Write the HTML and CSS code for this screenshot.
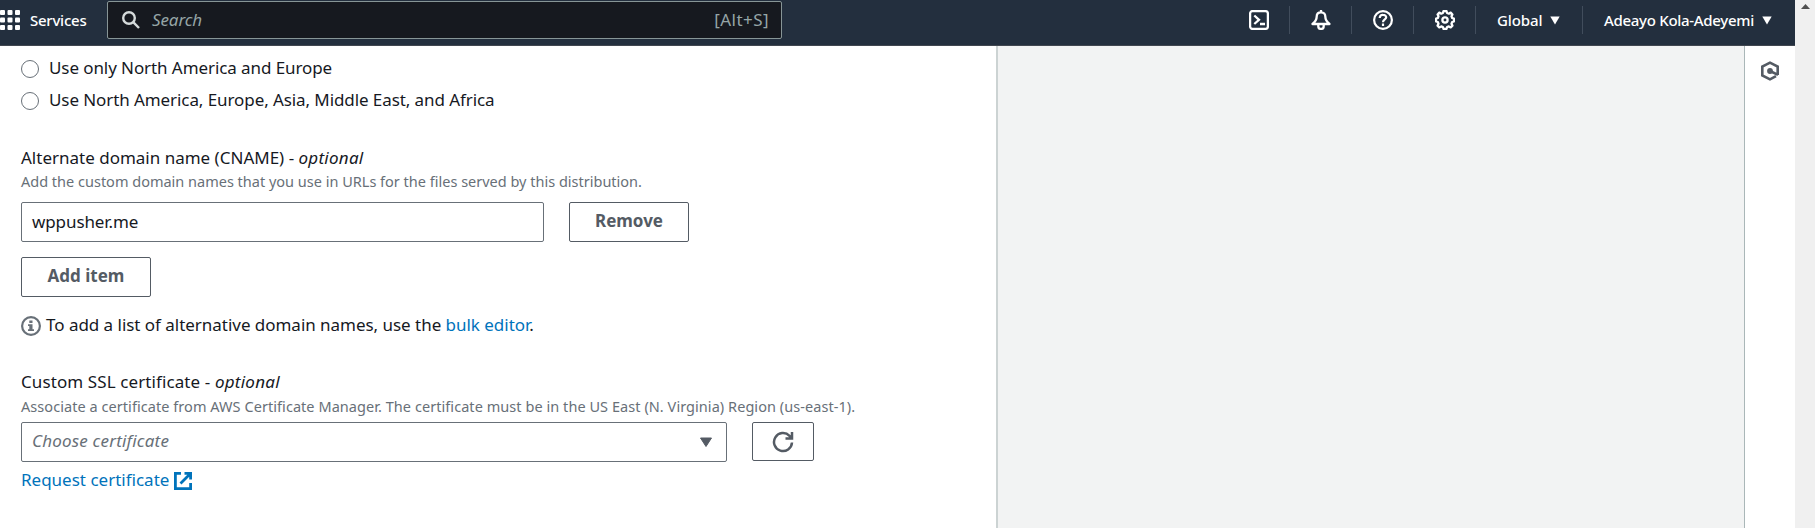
FILE: index.html
```html
<!DOCTYPE html>
<html lang="en">
<head>
<meta charset="utf-8">
<title>Create distribution</title>
<link rel="stylesheet" href="styles.css">
</head>
<body>
<div class="page">
  <header class="topbar">
    <svg class="grid-icon" width="20" height="20" viewBox="0 0 20 20" fill="#fff"><rect width="5" height="5" rx="1"/><rect x="7.5" width="5" height="5" rx="1"/><rect x="15" width="5" height="5" rx="1"/><rect y="7.5" width="5" height="5" rx="1"/><rect x="7.5" y="7.5" width="5" height="5" rx="1"/><rect x="15" y="7.5" width="5" height="5" rx="1"/><rect y="15" width="5" height="5" rx="1"/><rect x="7.5" y="15" width="5" height="5" rx="1"/><rect x="15" y="15" width="5" height="5" rx="1"/></svg>
    <span class="services">Services</span>
    <div class="search">
      <svg width="18" height="18" viewBox="0 0 18 18" fill="none" stroke="#d5dbdb" stroke-width="2.4"><circle cx="7" cy="7" r="5.8"/><path d="M11.2 11.2 17 17"/></svg>
      <span class="search-text">Search</span>
      <span class="shortcut">[Alt+S]</span>
    </div>
    <nav class="tools">
      <div class="tool"><svg width="20" height="20" viewBox="0 0 20 20" fill="none" stroke="#fff" stroke-width="2.3"><rect x="1.100" y="1.100" width="17.800" height="17.800" rx="2.500"/><path d="M5.300 5.500 10 9.800 5.300 14M11 14h5"/></svg></div>
      <div class="tool"><svg width="20" height="20" viewBox="0 0 20 20" fill="none" stroke="#fff" stroke-width="2.3" stroke-linejoin="round"><path d="M10 0v2M10 2.300C7 2.300 5.700 4 5.700 6.500C5.700 10 4 12 1.500 14H18.500C16 12 14.300 10 14.300 6.500C14.300 4 13 2.300 10 2.300ZM7.300 14v2.200a2.700 2.700 0 0 0 5.400 0V14"/></svg></div>
      <div class="tool"><svg width="20" height="20" viewBox="0 0 20 20" fill="none" stroke="#fff" stroke-width="2.200"><circle cx="10" cy="10" r="8.900"/><path d="M6.800 8V7.200A3.100 3.100 0 0 1 10 4.900C12 4.900 13.200 5.800 13.200 7.300C13.200 9.500 10 9.300 10 12.300M10 13.600v2.300"/></svg></div>
      <div class="tool"><svg width="20" height="20" viewBox="0 0 20 20" fill="none" stroke="#fff" stroke-width="2.300" stroke-linejoin="round"><circle cx="10" cy="10" r="2.600"/><path d="M8.500 1.100h3l.6 1.900 1.800.7L15.700 2.600l1.700 1.900-.9 1.800.7 1.700 1.700.6v2.800l-1.700.6-.7 1.700.9 1.900-1.700 1.800-1.800-1-1.800.7-.6 1.800h-3l-.6-1.800-1.700-.7-1.900 1-1.700-1.800.9-1.900-.7-1.700L1.100 11.400V8.600L2.800 8l.7-1.700-.9-1.800 1.700-1.900 1.900 1.100L7.900 3z"/></svg></div>
      <div class="menu region">Global<svg width="10" height="9" viewBox="0 0 10 9"><path d="M.3.5h9.400L5 8.500z" fill="#fff"/></svg></div>
      <div class="menu account"><span class="name">Adeayo Kola-Adeyemi</span><svg width="10" height="9" viewBox="0 0 10 9"><path d="M.3.5h9.400L5 8.500z" fill="#fff"/></svg></div>
    </nav>
  </header>
  <div class="scrollbar"><svg width="9" height="5" viewBox="0 0 9 5"><path d="M4.500 0 9 5H0z" fill="#505050"/></svg></div>
  <main class="form">
    <div class="option"><i class="radio"></i><span>Use only North America and Europe</span></div>
    <div class="option"><i class="radio"></i><span>Use North America, Europe, Asia, Middle East, and Africa</span></div>
    <div class="label label-cname"><span>Alternate domain name (CNAME) - <em>optional</em></span></div>
    <div class="hint"><span>Add the custom domain names that you use in URLs for the files served by this distribution.</span></div>
    <div class="row row-cname">
      <div class="input"><span class="domain">wppusher.me</span></div>
      <div class="button remove"><span>Remove</span></div>
    </div>
    <div class="button add"><span>Add item</span></div>
    <div class="info">
      <svg width="20" height="20" viewBox="0 0 20 20"><circle cx="10" cy="10" r="8.900" fill="none" stroke="#687078" stroke-width="2.200"/><path d="M8.300 4.500h3.200v2.500h-3.200zM7 8.200h4.500v5h1.500v1.800H7v-1.800h1.300V10H7z" fill="#687078"/></svg>
      <span>To add a list of alternative domain names, use the <a>bulk editor</a>.</span>
    </div>
    <div class="label label-ssl"><span>Custom SSL certificate - <em>optional</em></span></div>
    <div class="hint hint-ssl"><span>Associate a certificate from AWS Certificate Manager. The certificate must be in the US East (N. Virginia) Region (us-east-1).</span></div>
    <div class="row row-ssl">
      <div class="input select"><span>Choose certificate</span><svg width="14" height="11" viewBox="0 0 14 11"><path d="M1.500 1h11L7 9.500z" fill="#545b64" stroke="#545b64" stroke-linejoin="round"/></svg></div>
      <div class="button refresh"><svg width="22" height="22" viewBox="0 0 22 22" fill="none" stroke="#545b64" stroke-width="2.500"><path d="M20 11.500a9 9 0 1 1-2.500-6.700L19.500 7M20 1v6.500h-6.500"/></svg></div>
    </div>
    <div class="request"><a>Request certificate</a><svg width="18" height="18" viewBox="0 0 18 18" fill="none" stroke="#0073bb" stroke-width="2.800"><path d="M7 1.400H1.400v15.200h15.200V11M10.500 1.400h6.100v6.100M16.500 1.500 6.500 11.500"/></svg></div>
  </main>
  <div class="panel"></div>
  <aside class="rail"><svg width="20" height="20" viewBox="0 0 20 20" fill="none" stroke="#545b64" stroke-width="2.600"><path d="M17.700 14V5.600L10 1.600 2.300 5.600v8.800L10 18.400l6-3.200M10 10l8 3.800"/><circle cx="10" cy="10" r="2.900" fill="#545b64" stroke="none"/></svg></aside>
</div>
</body>
</html>
```

FILE: styles.css
```css
* { box-sizing: border-box; }
body { margin: 0; overflow: hidden; font-family: "Noto Sans", sans-serif; font-size: 17px; color: #16191f; }
span, a { white-space: nowrap; }
svg { display: block; flex: none; }
.page { width: 1815px; height: 528px; display: grid; grid-template-columns: 998px 746px 51px 20px; grid-template-rows: 46px 482px; }
.topbar { grid-column: 1 / 4; grid-row: 1; display: flex; background: #232f3e; border-bottom: 1px solid #414750; color: #fff; }
.grid-icon { margin-top: 10px; }
.services { margin-left: 10px; width: 77px; line-height: 41px; font-size: 15px; font-weight: 500; letter-spacing: -0.25px; }
.search { margin-top: 1px; width: 675px; height: 38px; display: flex; align-items: center; padding: 0 12px 0 14px; background: #16191f; border: 1px solid #879596; border-radius: 2px; color: #95a5a6; }
.search span { padding-bottom: 1px; }
.search-text { margin-left: 12px; font-style: italic; letter-spacing: -0.1px; }
.shortcut { margin-left: auto; letter-spacing: 0.45px; }
.tools { margin-left: auto; display: flex; padding-top: 6px; }
.tool { width: 62px; height: 28px; padding: 4px 0 0 21px; border-right: 1px solid #414d5c; }
.menu { height: 28px; display: flex; align-items: center; gap: 8px; font-size: 15px; font-weight: 500; letter-spacing: -0.1px; }
.region { width: 107px; padding-left: 21px; border-right: 1px solid #414d5c; }
.account { width: 212px; padding-left: 21px; letter-spacing: -0.3px; }
.scrollbar { grid-column: 4; grid-row: 1 / 3; background: #f0f0f0; padding: 4px 0 0 6px; }
.form { grid-column: 1; grid-row: 2; padding: 7px 0 0 21px; background: #fff; border-right: 2px solid #ccd3d3; }
.option { height: 32px; display: flex; align-items: center; gap: 10px; letter-spacing: -0.085px; }
.option span { padding-bottom: 3px; }
.radio { width: 18px; height: 18px; border: 1px solid #687078; border-radius: 50%; }
.label { height: 24px; line-height: 24px; }
.label em { letter-spacing: 0.25px; }
.label-cname { margin-top: 29px; margin-bottom: 1px; }
.hint { height: 20px; line-height: 20px; font-size: 14.5px; color: #687078; }
.row { display: flex; gap: 25px; }
.row-cname { margin-top: 11px; }
.input { width: 523px; height: 40px; display: flex; align-items: center; padding: 0 11px 0 10px; border: 1px solid #687078; border-radius: 2px; }
.domain { letter-spacing: -0.1px; padding-bottom: 2px; }
.button { height: 40px; display: flex; align-items: center; justify-content: center; border: 1px solid #545b64; border-radius: 2px; color: #545b64; font-weight: 700; padding-bottom: 3px; }
.remove { width: 120px; }
.add { width: 130px; margin-top: 15px; }
.info { margin-top: 17px; height: 24px; display: flex; gap: 5px; line-height: 22px; letter-spacing: -0.03px; }
.info svg { margin-top: 2px; }
a { color: #0073bb; }
.label-ssl { margin-top: 32px; letter-spacing: 0.1px; }
.hint-ssl { margin-top: 2px; letter-spacing: 0.055px; }
.row-ssl { margin-top: 6px; }
.select { width: 706px; padding-right: 13px; justify-content: space-between; color: #687078; font-style: italic; letter-spacing: 0.2px; }
.select span { padding-bottom: 4px; }
.refresh { width: 62px; height: 39px; padding: 0; }
.request { margin-top: 6px; height: 26px; display: flex; align-items: center; gap: 5px; }
.request a { padding-bottom: 4px; }
.panel { grid-column: 2; grid-row: 2; background: #f2f3f3; }
.rail { grid-column: 3; grid-row: 2; background: #fff; border-left: 1px solid #aab7b8; padding: 15px 0 0 15px; }
```
